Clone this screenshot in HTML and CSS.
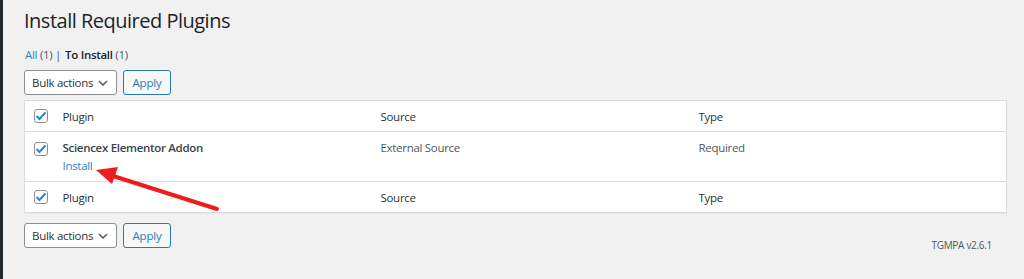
FILE: index.html
```html
<!DOCTYPE html>
<html lang="en">
<head>
  <meta charset="UTF-8">
  <meta name="viewport" content="width=device-width, initial-scale=1.0">
  <title>Install Required Plugins</title>
  <link rel="stylesheet" href="styles.css">
</head>
<body>

  <div class="menu-edge"></div>

  <div class="wrap">
    <h1>Install Required Plugins</h1>

    <ul class="subsubsub">
      <li><a href="#">All <span class="count">(1)</span></a> |</li>
      <li><a href="#" class="current">To Install <span class="count">(1)</span></a></li>
    </ul>

    <div class="tablenav">
      <div class="select-box">Bulk actions
        <svg class="chevron" width="10" height="6" viewBox="0 0 10 6"><path d="M1 1 L5 5 L9 1" fill="none" stroke="#50575e" stroke-width="1.5"/></svg>
      </div>
      <button class="button">Apply</button>
    </div>

    <table class="plugins">
      <colgroup>
        <col class="col-cb">
        <col>
        <col>
        <col>
      </colgroup>
      <thead>
        <tr>
          <td class="check-column"><span class="cb"><svg width="12" height="10" viewBox="0 0 12 10"><path d="M1.5 5 L4.5 8 L10.5 1.5" fill="none" stroke="#2a87c4" stroke-width="2"/></svg></span></td>
          <th>Plugin</th>
          <th>Source</th>
          <th>Type</th>
        </tr>
      </thead>
      <tbody>
        <tr class="plugin-row">
          <td class="check-column"><span class="cb"><svg width="12" height="10" viewBox="0 0 12 10"><path d="M1.5 5 L4.5 8 L10.5 1.5" fill="none" stroke="#2a87c4" stroke-width="2"/></svg></span></td>
          <td>
            <strong>Sciencex Elementor Addon</strong>
            <div class="row-actions"><a href="#">Install</a></div>
          </td>
          <td>External Source</td>
          <td>Required</td>
        </tr>
      </tbody>
      <tfoot>
        <tr>
          <td class="check-column"><span class="cb"><svg width="12" height="10" viewBox="0 0 12 10"><path d="M1.5 5 L4.5 8 L10.5 1.5" fill="none" stroke="#2a87c4" stroke-width="2"/></svg></span></td>
          <th>Plugin</th>
          <th>Source</th>
          <th>Type</th>
        </tr>
      </tfoot>
    </table>

    <div class="tablenav bottom">
      <div class="select-box">Bulk actions
        <svg class="chevron" width="10" height="6" viewBox="0 0 10 6"><path d="M1 1 L5 5 L9 1" fill="none" stroke="#50575e" stroke-width="1.5"/></svg>
      </div>
      <button class="button">Apply</button>
      <p class="version">TGMPA v2.6.1</p>
    </div>
  </div>

  <svg class="annotation" width="1024" height="279" viewBox="0 0 1024 279">
    <line x1="217" y1="209" x2="110" y2="175" stroke="#ee1c1c" stroke-width="4" stroke-linecap="round"/>
    <polygon points="96,170 118,167 112,184" fill="#ee1c1c"/>
  </svg>

</body>
</html>
```

FILE: styles.css
```css
body {
  font-family: "Open Sans", "Noto Sans", Arial, sans-serif;
  font-size: 11.5px;
  letter-spacing: -0.3px;
  background-color: #f1f1f1;
  color: #3c434a;
  margin: 0;
  padding: 0;
  display: flex;
  min-height: 279px;
}
.menu-edge {
  width: 3px;
  background-color: #23282d;
  flex-shrink: 0;
}
.wrap {
  flex: 1;
  padding: 0 17px 0 21px;
}
h1 {
  font-size: 20px;
  letter-spacing: -0.5px;
  font-weight: 400;
  color: #1d2327;
  margin: 0;
  padding: 7px 0 0;
  line-height: 27px;
}
.subsubsub {
  list-style: none;
  margin: 11px 0 0 1px;
  padding: 0;
  display: flex;
  gap: 4px;
  font-size: 11.5px;
  line-height: 20px;
  color: #50575e;
}
.subsubsub a {
  color: #2a87c4;
  text-decoration: none;
}
.subsubsub a.current {
  color: #1d2327;
  font-weight: 600;
}
.subsubsub .count {
  color: #50575e;
  font-weight: 400;
}
.tablenav {
  display: flex;
  align-items: center;
  gap: 6px;
  margin-top: 5px;
  height: 25px;
}
.tablenav.bottom {
  margin-top: 10px;
}
.select-box {
  box-sizing: border-box;
  width: 93px;
  height: 25px;
  border: 1px solid #8c8f94;
  border-radius: 3px;
  background-color: white;
  color: #2c3338;
  padding: 0 8px 0 7px;
  display: flex;
  align-items: center;
  justify-content: space-between;
  white-space: nowrap;
}
.button {
  box-sizing: border-box;
  font-family: inherit;
  font-size: 11.5px;
  letter-spacing: -0.2px;
  width: 48px;
  height: 25px;
  border: 1px solid #2a7ab0;
  border-radius: 3px;
  background-color: #f6f7f7;
  color: #2a7ab0;
  padding: 0;
  cursor: pointer;
}
.version {
  margin: 0 15px 0 auto;
  align-self: flex-end;
  font-size: 10px;
  color: #50575e;
  line-height: 12px;
  position: relative;
  top: 3px;
}
table.plugins {
  margin-top: 5px;
  width: 983px;
  border-collapse: collapse;
  background-color: white;
  border: 1px solid #dcdcde;
  box-shadow: 0 1px 1px rgba(0, 0, 0, 0.04);
  table-layout: fixed;
}
col.col-cb {
  width: 28px;
}
table.plugins th,
table.plugins td {
  text-align: left;
  font-weight: 400;
  padding: 0 10px;
  vertical-align: middle;
}
table.plugins thead tr,
table.plugins tfoot tr {
  height: 31px;
}
table.plugins thead tr {
  border-bottom: 1px solid #dcdcde;
}
table.plugins tfoot tr {
  border-top: 1px solid #dcdcde;
}
table.plugins th {
  color: #2c3338;
}
table.plugins .plugin-row {
  height: 50px;
}
table.plugins .plugin-row td {
  vertical-align: top;
  padding-top: 8px;
  color: #50575e;
}
.plugin-row strong {
  font-weight: 600;
  color: #3c434a;
  display: block;
  line-height: 16px;
}
.row-actions {
  margin-top: 2px;
  line-height: 16px;
}
.row-actions a {
  color: #2a87c4;
  text-decoration: none;
}
table.plugins td.check-column {
  padding: 0 0 0 9px;
}
table.plugins .plugin-row td.check-column {
  padding-top: 10px;
}
.cb {
  box-sizing: border-box;
  display: flex;
  align-items: center;
  justify-content: center;
  width: 14px;
  height: 14px;
  border: 1px solid #8c8f94;
  border-radius: 3px;
  background-color: white;
}
.annotation {
  position: absolute;
  left: 0;
  top: 0;
  pointer-events: none;
}
```
